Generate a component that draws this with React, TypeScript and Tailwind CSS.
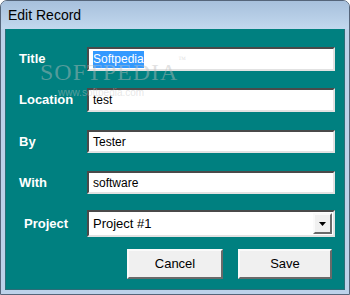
import React from 'react';

const field =
  'h-full w-[248px] bg-white border-2 border-t-[#4a4a4a] border-l-[#4a4a4a] border-b-[#e2e2e2] border-r-[#e2e2e2] pl-[4px] flex items-center text-[12px] text-black';

const raised =
  'bg-[#f0f0f0] border-2 border-t-[#fafafa] border-l-[#fafafa] border-b-[#6a6a6a] border-r-[#6a6a6a] flex items-center justify-center';

function Row({ label, pad, mt, h, children }: { label: string; pad: string; mt: string; h: string; children: React.ReactNode }) {
  return (
    <div className={`flex items-center ${mt} ${h}`}>
      <div className={`w-[81px] ${pad} text-[13px] font-bold text-white`}>{label}</div>
      {children}
    </div>
  );
}

export default function App() {
  return (
    <div className="w-[350px] h-[295px] bg-white overflow-hidden" style={{ fontFamily: '"Liberation Sans", Arial, sans-serif' }}>
      <div className="relative w-full h-full rounded-t-[7px] border border-[#55657a] bg-[#bcd2ea] flex flex-col">
        {/* title bar */}
        <div className="h-[28px] flex items-center pl-[7px] rounded-t-[6px] bg-gradient-to-b from-[#a7c0dc] to-[#c2d8ee] text-[14px] text-black">
          Edit Record
        </div>

        {/* dialog body */}
        <div className="flex-1 mx-[4px] mb-[4px] bg-[#008080] border border-t-0 border-[#2d6d78] flex flex-col pt-[18px]">
          <Row label="Title" pad="pl-[13px]" mt="mt-0" h="h-[24px]">
            <div className={field}>
              <span className="bg-[#3399ff] text-white leading-[17px]">Softpedia</span>
            </div>
          </Row>
          <Row label="Location" pad="pl-[13px]" mt="mt-[17px]" h="h-[24px]">
            <div className={field}>test</div>
          </Row>
          <Row label="By" pad="pl-[13px]" mt="mt-[18px]" h="h-[23px]">
            <div className={field}>Tester</div>
          </Row>
          <Row label="With" pad="pl-[13px]" mt="mt-[18px]" h="h-[23px]">
            <div className={field}>software</div>
          </Row>
          <Row label="Project" pad="pl-[18px]" mt="mt-[16px]" h="h-[27px]">
            <div className={`${field} text-[13px] justify-between pr-[1px]`}>
              <span>Project #1</span>
              <div className={`${raised} w-[19px] h-[21px]`}>
                <svg width="7" height="4" viewBox="0 0 7 4">
                  <path d="M0 0h7L3.5 4z" fill="#000" />
                </svg>
              </div>
            </div>
          </Row>

          <div className="flex justify-end gap-[15px] pr-[12px] mt-[12px]">
            <button className={`${raised} w-[96px] h-[30px] text-[13px] text-black`}>Cancel</button>
            <button className={`${raised} w-[94px] h-[30px] text-[13px] text-black`}>Save</button>
          </div>
        </div>

        {/* watermark */}
        <div
          className="absolute left-[39px] top-[53px] text-[24px] tracking-[1px] text-[#bebebe]/45 pointer-events-none"
          style={{ fontFamily: '"Liberation Serif", "Times New Roman", serif' }}
        >
          SOFTPEDIA<span className="text-[8px] align-top">™</span>
        </div>
        <div className="absolute left-[57px] top-[84px] text-[10px] text-[#c8c8c8]/45 pointer-events-none">www.softpedia.com</div>
      </div>
    </div>
  );
}
